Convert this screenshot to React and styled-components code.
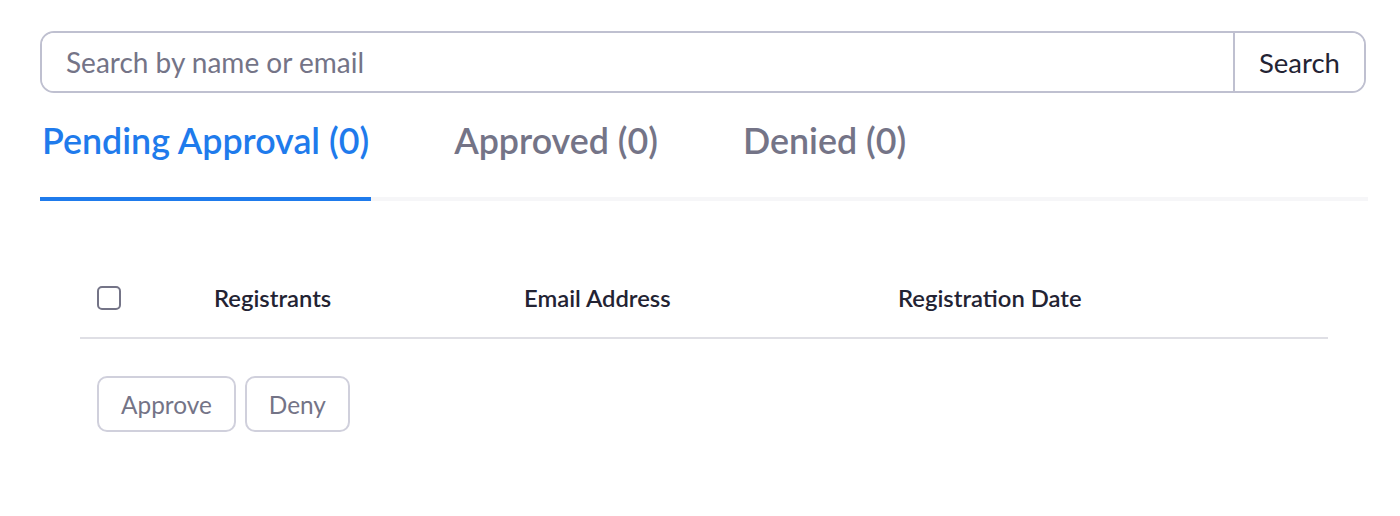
import React, { useState } from 'react';
import styled, { createGlobalStyle } from 'styled-components';

const GlobalStyle = createGlobalStyle`
  body {
    margin: 0;
    background: #fff;
    font-family: Lato, "Open Sans", sans-serif;
  }
`;

const Page = styled.div`
  padding: 31px 34px 0 40px;
`;

const SearchBar = styled.form`
  display: flex;
  height: 62px;
  border: 2px solid #bfc0d0;
  border-radius: 14px;
  box-sizing: border-box;
  overflow: hidden;
`;

const SearchInput = styled.input`
  flex: 1;
  border: none;
  outline: none;
  padding: 0 24px;
  font-family: Lato, sans-serif;
  font-size: 28px;
  color: #232333;
  &::placeholder {
    color: #747487;
  }
`;

const SearchButton = styled.button`
  width: 131px;
  border: none;
  border-left: 2px solid #bfc0d0;
  background: #fff;
  font-family: Lato, sans-serif;
  font-size: 27.5px;
  color: #232333;
  cursor: pointer;
`;

const Tabs = styled.div`
  display: flex;
  gap: 81px;
  margin-top: 18px;
  border-bottom: 4px solid #f6f6f8;
  margin-right: -2px;
`;

const Tab = styled.button`
  border: none;
  background: none;
  padding: 10px 2px 36px 2px;
  margin-bottom: -4px;
  font-family: Lato, sans-serif;
  font-size: 35.8px;
  font-weight: 600;
  color: ${p => (p.active ? '#1f7bec' : '#747487')};
  border-bottom: 4px solid ${p => (p.active ? '#1f7bec' : 'transparent')};
  cursor: pointer;
  line-height: 40px;
`;

const TableWrap = styled.div`
  margin: 72px 38px 0 40px;
`;

const HeaderRow = styled.div`
  display: grid;
  grid-template-columns: 117px 310px 374px 1fr;
  align-items: center;
  height: 50px;
  padding: 0 0 14px 17px;
  border-bottom: 2px solid #dfdfe5;
`;

const Check = styled.span`
  width: 24px;
  height: 24px;
  border: 2px solid #747487;
  border-radius: 5px;
  box-sizing: border-box;
`;

const HeadCell = styled.div`
  font-size: 23.8px;
  font-weight: 600;
  color: #232333;
`;

const Actions = styled.div`
  display: flex;
  gap: 9px;
  margin: 37px 0 0 17px;
`;

const ActionButton = styled.button`
  height: 56px;
  padding: 0 22px;
  border: 2px solid #d0d0dc;
  border-radius: 10px;
  background: #fff;
  font-family: Lato, sans-serif;
  font-size: 24.4px;
  color: #747487;
  cursor: pointer;
`;

const tabs = ['Pending Approval (0)', 'Approved (0)', 'Denied (0)'];

export default function App() {
  const [active, setActive] = useState(0);
  return (
    <>
      <GlobalStyle />
      <Page>
        <SearchBar onSubmit={e => e.preventDefault()}>
          <SearchInput placeholder="Search by name or email" />
          <SearchButton type="submit">Search</SearchButton>
        </SearchBar>
        <Tabs>
          {tabs.map((t, i) => (
            <Tab key={t} active={i === active} onClick={() => setActive(i)}>
              {t}
            </Tab>
          ))}
        </Tabs>
        <TableWrap>
          <HeaderRow>
            <Check />
            <HeadCell>Registrants</HeadCell>
            <HeadCell>Email Address</HeadCell>
            <HeadCell>Registration Date</HeadCell>
          </HeaderRow>
          <Actions>
            <ActionButton>Approve</ActionButton>
            <ActionButton>Deny</ActionButton>
          </Actions>
        </TableWrap>
      </Page>
    </>
  );
}
